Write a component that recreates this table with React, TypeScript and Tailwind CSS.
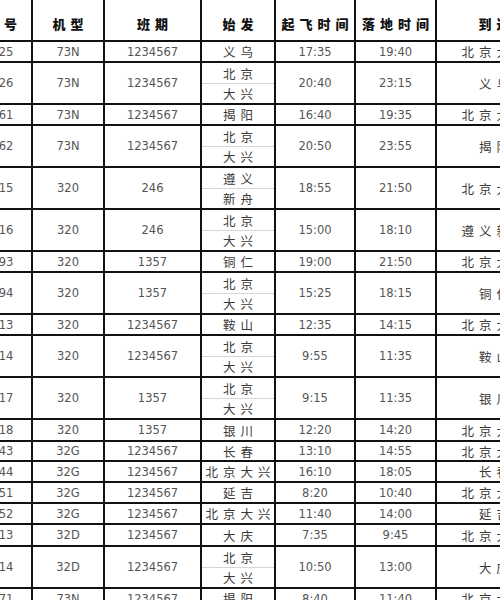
type Row = {
  no: string;
  type: string;
  days: string;
  from: string[];
  dep: string;
  arr: string;
  to: string;
  h: string;
};

const cols = ['w-[79px]', 'w-[72px]', 'w-[97px]', 'w-[74px]', 'w-[80px]', 'w-[81px]', 'w-[116px]'];

const rows: Row[] = [
  { no: 'GJ8825', type: '73N', days: '1234567', from: ['义乌'], dep: '17:35', arr: '19:40', to: '北京大兴', h: 'h-[21px]' },
  { no: 'GJ8826', type: '73N', days: '1234567', from: ['北京', '大兴'], dep: '20:40', arr: '23:15', to: '义乌', h: 'h-[42px]' },
  { no: 'GJ8861', type: '73N', days: '1234567', from: ['揭阳'], dep: '16:40', arr: '19:35', to: '北京大兴', h: 'h-[21px]' },
  { no: 'GJ8862', type: '73N', days: '1234567', from: ['北京', '大兴'], dep: '20:50', arr: '23:55', to: '揭阳', h: 'h-[42px]' },
  { no: 'GJ8615', type: '320', days: '246', from: ['遵义', '新舟'], dep: '18:55', arr: '21:50', to: '北京大兴', h: 'h-[42px]' },
  { no: 'GJ8616', type: '320', days: '246', from: ['北京', '大兴'], dep: '15:00', arr: '18:10', to: '遵义新舟', h: 'h-[42px]' },
  { no: 'GJ8693', type: '320', days: '1357', from: ['铜仁'], dep: '19:00', arr: '21:50', to: '北京大兴', h: 'h-[21px]' },
  { no: 'GJ8694', type: '320', days: '1357', from: ['北京', '大兴'], dep: '15:25', arr: '18:15', to: '铜仁', h: 'h-[42px]' },
  { no: 'GJ8713', type: '320', days: '1234567', from: ['鞍山'], dep: '12:35', arr: '14:15', to: '北京大兴', h: 'h-[21px]' },
  { no: 'GJ8714', type: '320', days: '1234567', from: ['北京', '大兴'], dep: '9:55', arr: '11:35', to: '鞍山', h: 'h-[42px]' },
  { no: 'GJ8617', type: '320', days: '1357', from: ['北京', '大兴'], dep: '9:15', arr: '11:35', to: '银川', h: 'h-[42px]' },
  { no: 'GJ8618', type: '320', days: '1357', from: ['银川'], dep: '12:20', arr: '14:20', to: '北京大兴', h: 'h-[22px]' },
  { no: 'GJ8643', type: '32G', days: '1234567', from: ['长春'], dep: '13:10', arr: '14:55', to: '北京大兴', h: 'h-[20px]' },
  { no: 'GJ8644', type: '32G', days: '1234567', from: ['北京大兴'], dep: '16:10', arr: '18:05', to: '长春', h: 'h-[21px]' },
  { no: 'GJ8651', type: '32G', days: '1234567', from: ['延吉'], dep: '8:20', arr: '10:40', to: '北京大兴', h: 'h-[21px]' },
  { no: 'GJ8652', type: '32G', days: '1234567', from: ['北京大兴'], dep: '11:40', arr: '14:00', to: '延吉', h: 'h-[21px]' },
  { no: 'GJ8813', type: '32D', days: '1234567', from: ['大庆'], dep: '7:35', arr: '9:45', to: '北京大兴', h: 'h-[22px]' },
  { no: 'GJ8814', type: '32D', days: '1234567', from: ['北京', '大兴'], dep: '10:50', arr: '13:00', to: '大庆', h: 'h-[42px]' },
  { no: 'GJ8871', type: '73N', days: '1234567', from: ['揭阳'], dep: '8:40', arr: '11:40', to: '北京大兴', h: 'h-[21px]' },
];

const cellBase =
  'flex shrink-0 items-center justify-center overflow-hidden whitespace-nowrap border-r-2 border-[#111]';
const num = "font-['DejaVu_Sans',sans-serif] text-[11.5px] text-[#555] pt-[2px]";
const han = "font-['Noto_Sans_CJK_SC',sans-serif] text-[12.5px] leading-none tracking-[5px] pl-[5px] text-[#3a3a3a]";

function Han({ text }: { text: string }) {
  return <span className={han}>{text}</span>;
}

export default function App() {
  const heads = ['航班号', '机型', '班期', '始发', '起飞时间', '落地时间', '到达'];

  return (
    <div className="h-[600px] w-[500px] overflow-hidden bg-white">
      <div className="-ml-[46px] flex w-[599px] flex-col">
        <div className="flex h-[42px] border-b-2 border-[#111]">
          {heads.map((h, i) => (
            <div key={h} className={`${cols[i]} ${cellBase} pt-[6px]`}>
              <span className="font-['Noto_Sans_CJK_SC',sans-serif] text-[13px] font-black leading-none tracking-[5px] pl-[5px] text-[#111]">
                {h}
              </span>
            </div>
          ))}
        </div>
        {rows.map((r, idx) => (
          <div key={idx} className={`flex ${r.h} shrink-0 border-b-2 border-[#111]`}>
            <div className={`${cols[0]} ${cellBase}`}>
              <span className={num}>{r.no}</span>
            </div>
            <div className={`${cols[1]} ${cellBase}`}>
              <span className={num}>{r.type}</span>
            </div>
            <div className={`${cols[2]} ${cellBase}`}>
              <span className={num}>{r.days}</span>
            </div>
            {r.from.length === 2 ? (
              <div className={`${cols[3]} flex shrink-0 flex-col border-r-2 border-[#111]`}>
                <div className="flex flex-1 items-center justify-center border-b border-[#d6d6d6] pt-[2px]">
                  <Han text={r.from[0]} />
                </div>
                <div className="flex flex-1 items-center justify-center pt-[2px]">
                  <Han text={r.from[1]} />
                </div>
              </div>
            ) : (
              <div className={`${cols[3]} ${cellBase} pt-[2px]`}>
                <Han text={r.from[0]} />
              </div>
            )}
            <div className={`${cols[4]} ${cellBase}`}>
              <span className={num}>{r.dep}</span>
            </div>
            <div className={`${cols[5]} ${cellBase}`}>
              <span className={num}>{r.arr}</span>
            </div>
            <div className={`${cols[6]} ${cellBase} pt-[2px]`}>
              <Han text={r.to} />
            </div>
          </div>
        ))}
      </div>
    </div>
  );
}
